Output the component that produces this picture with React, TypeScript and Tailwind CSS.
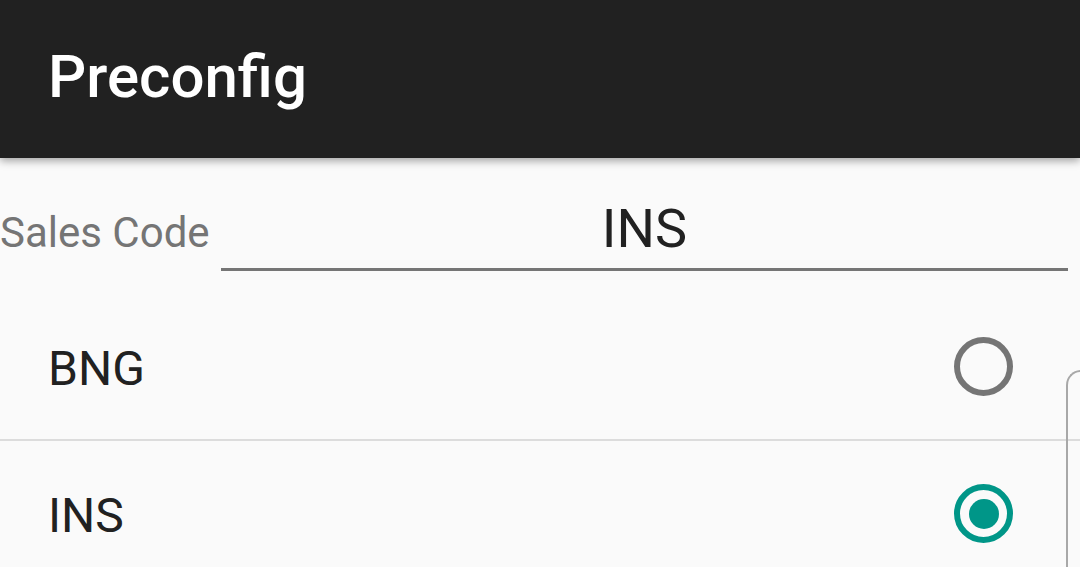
import React from "react";

const codes = [
  { code: "BNG", selected: false },
  { code: "INS", selected: true },
];

function Radio({ checked }: { checked: boolean }) {
  if (checked) {
    return (
      <div className="flex h-[59px] w-[59px] items-center justify-center rounded-full border-[6px] border-[#009688]">
        <div className="h-[30px] w-[30px] rounded-full bg-[#009688]" />
      </div>
    );
  }
  return (
    <div className="h-[59px] w-[59px] rounded-full border-[6px] border-[#757575]" />
  );
}

export default function App() {
  return (
    <div className="relative h-[567px] w-[1080px] overflow-hidden bg-[#fafafa] font-['Roboto',sans-serif]">
      <header className="relative z-10 h-[158px] bg-[#212121] pl-[48px] pt-[47px] shadow-[0_3px_8px_rgba(0,0,0,0.35)]">
        <h1 className="text-[60px] font-medium leading-none text-white">
          Preconfig
        </h1>
      </header>

      <div className="mt-[31px] flex items-baseline pr-[12px]">
        <span className="w-[221px] shrink-0 text-[42px] text-[#757575]">
          Sales Code
        </span>
        <div className="flex-1 border-b-[3px] border-[#757575] text-center text-[54px] leading-[79px] text-[#212121]">
          INS
        </div>
      </div>

      <ul className="mt-[23px]">
        {codes.map((item, index) => (
          <li
            key={item.code}
            className={
              index === 0
                ? "flex h-[147px] items-center justify-between border-b-2 border-[#dcdcdc] pl-[48px] pr-[67px]"
                : "flex h-[145px] items-center justify-between pl-[48px] pr-[67px]"
            }
          >
            <span className="mt-[4px] text-[48px] leading-none text-[#212121]">
              {item.code}
            </span>
            <Radio checked={item.selected} />
          </li>
        ))}
      </ul>

      <div className="absolute left-[1066px] top-[370px] h-[260px] w-[40px] rounded-tl-[15px] border-l-2 border-t-2 border-[#a8a8a8]" />
    </div>
  );
}
